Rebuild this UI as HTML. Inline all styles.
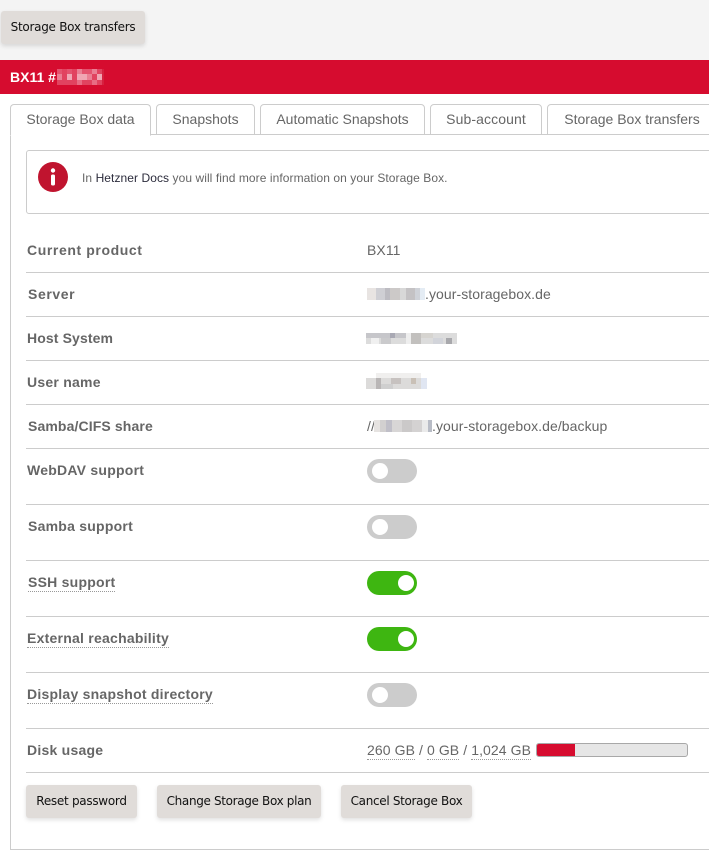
<!DOCTYPE html>
<html lang="en"><head><meta charset="utf-8"><title>Storage Box</title>
<style>
html,body{margin:0;padding:0;background:#f4f4f4;width:709px;height:851px;overflow:hidden}
body{position:relative;font-family:"Liberation Sans",Arial,sans-serif;font-size:14px;color:#666}
.a{position:absolute;white-space:nowrap}
.btn{position:absolute;height:33px;line-height:32px;background:#e0dcd9;border-radius:3px;box-shadow:0 2px 4px rgba(0,0,0,.12);color:#111;font-family:"DejaVu Sans",sans-serif;font-size:12px;letter-spacing:-.28px;text-align:center;white-space:nowrap}
.bar{position:absolute;left:0;top:60px;width:709px;height:34px;background:#d60c2f;color:#fff;font-weight:bold;font-size:14px;line-height:34px}
.main{position:absolute;left:0;top:94px;width:709px;height:757px;background:#fff}
.panel{position:absolute;left:10px;top:134px;width:700px;height:714px;border:1px solid #ccc;border-right:0;background:#fff}
.tab{position:absolute;top:104px;height:29px;line-height:29px;border:1px solid #ccc;border-bottom:1px solid #ccc;border-radius:4px 4px 0 0;background:#fff;text-align:center;color:#666;white-space:nowrap;font-size:14px}
.tab.on{border-bottom-color:#fff;z-index:3;height:30px}
.notice{position:absolute;left:26px;top:150px;width:690px;height:62px;border:1px solid #ccc;border-radius:3px;background:#fff}
.line{position:absolute;left:26px;width:683px;height:1px;background:#ccc}
.l{position:absolute;left:27px;font-weight:bold;color:#666;white-space:nowrap;line-height:16px;letter-spacing:.24px}
.v{position:absolute;left:367px;color:#666;white-space:nowrap;line-height:16px;letter-spacing:.07px}
.d{border-bottom:1px dotted #999;padding-bottom:1px}
.sw{position:absolute;left:367px;width:50px;height:24px;border-radius:12px;background:#ccc}
.sw i{position:absolute;left:5px;top:4px;width:16px;height:16px;border-radius:50%;background:#fff}
.sw.on{background:#3eb611}
.sw.on i{left:31px}
svg{position:absolute;display:block}
</style></head><body>
<div class="btn" style="left:1px;top:11px;width:144px">Storage Box transfers</div>
<div class="bar"><span style="margin-left:10px">BX11 #</span></div>
<svg style="left:57px;top:69px" width="47" height="16" shape-rendering="crispEdges">
<rect width="47" height="16" fill="#e14360"/>
<g fill="#e4536f"><rect x="0" y="0" width="5" height="5"/><rect x="10" y="0" width="5" height="5"/><rect x="25" y="0" width="10" height="5"/></g>
<g fill="#ea7f94"><rect x="0" y="5" width="5" height="6"/><rect x="20" y="0" width="5" height="5"/><rect x="35" y="0" width="5" height="5"/><rect x="30" y="5" width="5" height="6"/></g>
<g fill="#f0a6b4"><rect x="10" y="5" width="5" height="6"/><rect x="20" y="5" width="10" height="6"/><rect x="40" y="5" width="5" height="6"/></g>
<g fill="#e86c84"><rect x="20" y="11" width="5" height="5"/><rect x="35" y="11" width="5" height="5"/></g>
<rect x="45" y="0" width="2" height="16" fill="#d6203f"/>
</svg>
<div class="main"></div>
<div class="panel"></div>
<div class="tab on" style="left:10px;width:139px">Storage Box data</div>
<div class="tab" style="left:156px;width:97px">Snapshots</div>
<div class="tab" style="left:260px;width:163px">Automatic Snapshots</div>
<div class="tab" style="left:430px;width:110px;letter-spacing:.1px">Sub-account</div>
<div class="tab" style="left:547px;width:168px">Storage Box transfers</div>
<div class="notice"></div>
<svg style="left:38px;top:162px" width="30" height="30" viewBox="0 0 30 30"><circle cx="15" cy="15" r="15" fill="#c0142f"/><circle cx="15" cy="8.5" r="2.2" fill="#fff"/><rect x="13" y="12.5" width="4" height="11" rx="1.6" fill="#fff"/></svg>
<div class="a" style="left:82px;top:170px;font-size:12px;line-height:16px;color:#666;letter-spacing:.07px">In <span style="color:#2c2c3c">Hetzner Docs</span> you will find more information on your Storage Box.</div>

<div class="l" style="top:242px;letter-spacing:.6px">Current product</div><div class="v" style="top:242px">BX11</div><div class="line" style="top:272px"></div>
<div class="l" style="top:286px;left:28px;letter-spacing:.6px">Server</div><div class="line" style="top:316px"></div>
<div class="v" style="top:286px;left:425px">.your-storagebox.de</div>
<svg style="left:367px;top:288px" width="58" height="12" shape-rendering="crispEdges"><rect width="58" height="12" fill="#d2d0d0"/><rect width="9" height="12" fill="#e8e4e2"/><rect x="9" width="9" height="12" fill="#cfcfd4"/><rect x="18" width="5" height="12" fill="#bdbcc2"/><rect x="23" width="10" height="12" fill="#ccc9c8"/><rect x="33" width="6" height="12" fill="#d8d8d8"/><rect x="39" width="9" height="12" fill="#c4c2c4"/><rect x="48" width="5" height="12" fill="#cfd2d8"/><rect x="53" width="5" height="12" fill="#e4ecf4"/></svg>
<div class="l" style="top:330px;letter-spacing:.12px">Host System</div><div class="line" style="top:360px"></div>
<svg style="left:366px;top:333px" width="91" height="11" shape-rendering="crispEdges"><rect width="91" height="11" fill="#dcdcdc"/><rect y="0" width="40" height="5" fill="#c6c6ca"/><rect x="5" y="5" width="8" height="6" fill="#f0f0f0"/><rect x="24" y="0" width="5" height="5" fill="#a9a9b4"/><rect x="40" width="5" height="11" fill="#eeeeee"/><rect x="45" width="10" height="11" fill="#c2c0be"/><rect x="55" width="12" height="5" fill="#d6d4d0"/><rect x="67" y="5" width="10" height="6" fill="#d2d4da"/><rect x="80" y="5" width="6" height="6" fill="#a8a8ac"/><rect x="15" y="5" width="10" height="6" fill="#cacacc"/></svg>
<div class="l" style="top:374px">User name</div><div class="line" style="top:404px"></div>
<svg style="left:366px;top:373px" width="61" height="16" shape-rendering="crispEdges"><rect x="10" width="45" height="5" fill="#f0efee"/><rect y="5" width="61" height="11" fill="#dcdbda"/><rect x="10" y="5" width="5" height="11" fill="#b9b6b6"/><rect x="25" y="5" width="10" height="6" fill="#c7c2c0"/><rect x="45" y="5" width="5" height="6" fill="#c9c0b6"/><rect x="55" y="5" width="6" height="11" fill="#e0e6f2"/><rect x="15" y="11" width="12" height="5" fill="#cfcfcf"/></svg>
<div class="l" style="top:418px;left:28px;letter-spacing:.12px">Samba/CIFS share</div><div class="line" style="top:448px"></div>
<div class="v" style="top:418px">//</div><div class="v" style="top:418px;left:432px">.your-storagebox.de/backup</div>
<svg style="left:374px;top:420px" width="58" height="12" shape-rendering="crispEdges"><rect width="58" height="12" fill="#d2d0d0"/><rect width="6" height="12" fill="#e6e3e1"/><rect x="12" width="6" height="12" fill="#c0bfc8"/><rect x="18" width="10" height="12" fill="#d8d6d6"/><rect x="28" width="10" height="12" fill="#cbc9c9"/><rect x="38" width="10" height="12" fill="#d4d2d2"/><rect x="48" width="6" height="12" fill="#eaeaea"/><rect x="54" width="4" height="12" fill="#b8bcc6"/></svg>

<div class="l" style="top:462px"><span class="d" style="border-bottom-color:transparent">WebDAV support</span></div><div class="sw" style="top:459px"><i></i></div><div class="line" style="top:504px"></div>
<div class="l" style="top:518px;left:28px">Samba support</div><div class="sw" style="top:515px"><i></i></div><div class="line" style="top:560px"></div>
<div class="l" style="top:574px;left:28px"><span class="d">SSH support</span></div><div class="sw on" style="top:571px"><i></i></div><div class="line" style="top:616px"></div>
<div class="l" style="top:630px"><span class="d">External reachability</span></div><div class="sw on" style="top:627px"><i></i></div><div class="line" style="top:672px"></div>
<div class="l" style="top:686px"><span class="d">Display snapshot directory</span></div><div class="sw" style="top:683px"><i></i></div><div class="line" style="top:728px"></div>
<div class="l" style="top:742px">Disk usage</div><div class="line" style="top:772px"></div>
<div class="v" style="top:742px;letter-spacing:.09px"><span class="d">260 GB</span> / <span class="d">0 GB</span> / <span class="d">1,024 GB</span></div>
<div class="a" style="left:536px;top:743px;width:150px;height:12px;border:1px solid #a8a8a8;border-radius:3px;background:#e6e6e6;overflow:hidden"><div style="width:38px;height:12px;background:#d60c2f"></div></div>

<div class="btn" style="left:26px;top:785px;width:111px">Reset password</div>
<div class="btn" style="left:157px;top:785px;width:164px;letter-spacing:-.34px">Change Storage Box plan</div>
<div class="btn" style="left:341px;top:785px;width:131px;letter-spacing:-.32px">Cancel Storage Box</div>
</body></html>
